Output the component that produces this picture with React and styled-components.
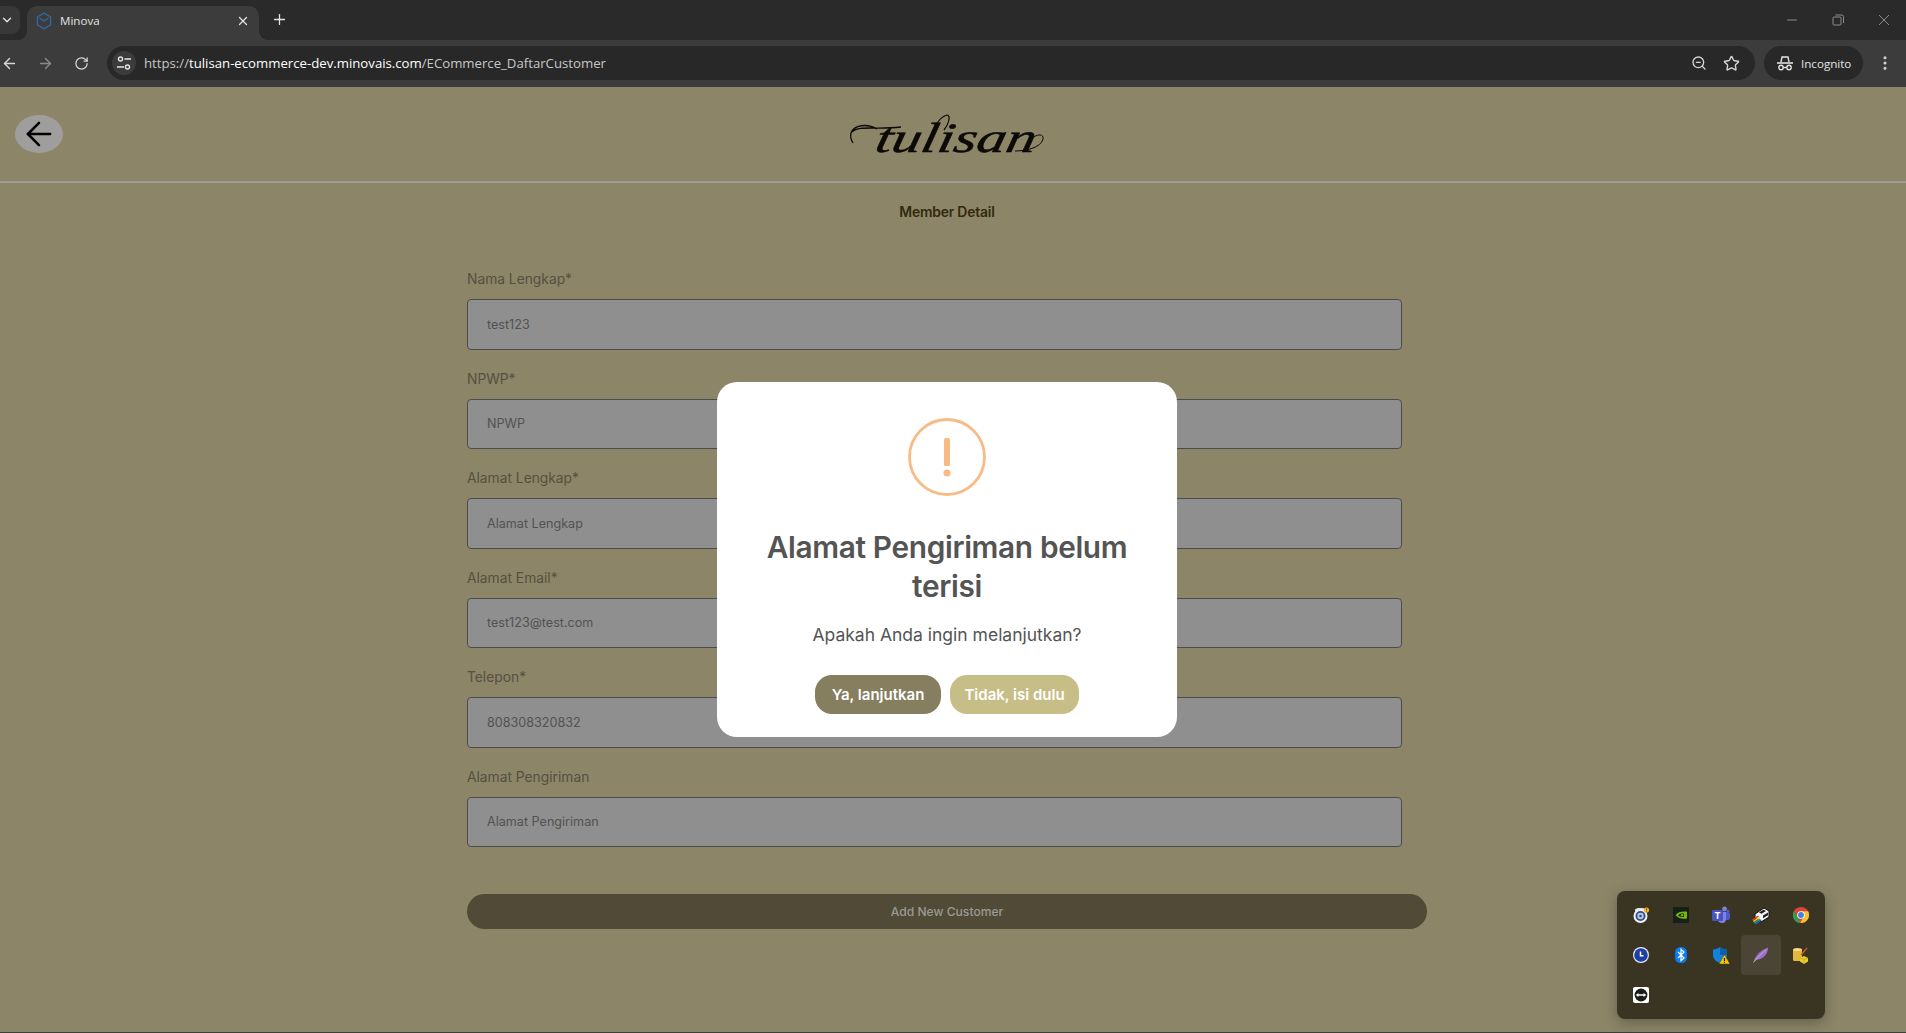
import styled, { createGlobalStyle } from "styled-components";
import { ArrowLeft, ArrowRight, ChevronDown, Plus, RotateCw, ZoomOut, Star, X, EllipsisVertical } from "lucide-react";

const Global = createGlobalStyle`
  html, body { margin: 0; padding: 0; background: #8c8568; }
  body { font-family: Inter, "Liberation Sans", sans-serif; }
  * { box-sizing: border-box; }
`;

const Screen = styled.div`
  width: 1906px;
  height: 1033px;
  display: flex;
  flex-direction: column;
  overflow: hidden;
  position: relative;
`;

/* browser chrome */
const TabStrip = styled.div`
  height: 40px;
  background: #2a2a2a;
  display: flex;
  align-items: flex-end;
  color: #e3e3e3;
  font-family: "Open Sans", "Liberation Sans", sans-serif;
`;
const TabList = styled.div`
  width: 20px;
  height: 28px;
  margin-right: 7px;
  align-self: flex-start;
  margin-top: 6px;
  padding-right: 6px;
  background: #383838;
  border-radius: 0 8px 8px 0;
  display: flex;
  align-items: center;
  justify-content: center;
`;
const Tab = styled.div`
  width: 232px;
  height: 34px;
  background: #3c3c3c;
  border-radius: 10px 10px 0 0;
  display: flex;
  align-items: center;
  padding: 0 9px 5px 9px;
  font-size: 11.6px;
  position: relative;

  &::before, &::after {
    content: "";
    position: absolute;
    bottom: 0;
    width: 10px;
    height: 10px;
  }
  &::before {
    left: -10px;
    background: radial-gradient(circle at 0 0, transparent 10px, #3c3c3c 10.5px);
  }
  &::after {
    right: -10px;
    background: radial-gradient(circle at 100% 0, transparent 10px, #3c3c3c 10.5px);
  }
`;
const TabTitle = styled.span`
  flex: 1;
  margin-left: 8px;
`;
const NewTab = styled.div`
  width: 40px;
  height: 34px;
  display: flex;
  align-items: center;
  justify-content: center;
  align-self: flex-start;
  margin-top: 2px;
`;
const WindowControls = styled.div`
  margin-left: auto;
  align-self: flex-start;
  display: flex;
  padding-top: 12px;
  padding-right: 14px;
  gap: 30px;
  svg { display: block; }
`;
const Toolbar = styled.div`
  height: 47px;
  background: #3c3c3c;
  display: flex;
  align-items: center;
  padding: 0 10px 1px 0;
  color: #e3e3e3;
  font-family: "Open Sans", "Liberation Sans", sans-serif;
`;
const NavButton = styled.div`
  width: ${(p) => p.$w || 36}px;
  height: 34px;
  display: flex;
  align-items: center;
  justify-content: center;
  color: ${(p) => (p.$off ? "#8a8a8a" : "#d6d6d6")};
`;
const NavGap = styled.div`
  width: 9px;
`;
const UrlBar = styled.div`
  width: 1648px;
  height: 34px;
  margin-left: 8px;
  border-radius: 17px;
  background: #282828;
  display: flex;
  align-items: center;
  padding: 0 15px 0 5px;
  font-size: 13.2px;
`;
const SiteInfo = styled.div`
  width: 24px;
  height: 24px;
  border-radius: 50%;
  background: #3c3c3c;
  display: flex;
  align-items: center;
  justify-content: center;
  margin-right: 8px;
`;
const UrlText = styled.div`
  flex: 1;
  color: #c7c7c7;
  span { color: #fff; }
`;
const UrlIcons = styled.div`
  display: flex;
  align-items: center;
  gap: 16px;
  color: #d6d6d6;
`;
const IncognitoPill = styled.div`
  width: 99px;
  height: 34px;
  margin-left: 9px;
  border-radius: 17px;
  background: #282828;
  display: flex;
  align-items: center;
  gap: 7px;
  padding-left: 12px;
  font-size: 11.6px;
`;
const MenuDots = styled.div`
  margin-left: 13px;
  display: flex;
  color: #d6d6d6;
`;

/* page */
const Page = styled.main`
  flex: 1;
  background: #8c8568;
  border-bottom: 1px solid #3f3f3a;
  position: relative;
`;
const Header = styled.header`
  height: 96px;
  padding: 0 12px 1px 15px;
  border-bottom: 2px solid #9e9a94;
  display: grid;
  grid-template-columns: 1fr auto 1fr;
  align-items: center;
`;
const BackButton = styled.button`
  width: 48px;
  height: 38px;
  padding: 0;
  border: 0;
  border-radius: 50%;
  background: #a09e9c;
  color: #000;
  display: flex;
  align-items: center;
  justify-content: center;
`;
const Logo = styled.svg`
  display: block;
  overflow: visible;
`;
const Heading = styled.h1`
  margin: 19px 12px 0 0;
  text-align: center;
  font-size: 13.9px;
  line-height: 20px;
  font-weight: 600;
  letter-spacing: -0.2px;
  color: #33290f;
`;
const Form = styled.form`
  width: 960px;
  margin: 46px 0 0 467px;
  display: flex;
  flex-direction: column;
`;
const Field = styled.label`
  display: block;
  height: 99.5px;
`;
const FieldName = styled.div`
  height: 20px;
  line-height: 20px;
  padding-top: 1px;
  font-size: 13.8px;
  color: #565040;
  margin-bottom: 11px;
`;
const Input = styled.input`
  display: block;
  width: 935px;
  height: 50.5px;
  padding: 0 19px;
  border: 1px solid #4c4c4c;
  border-radius: 4px;
  background: #8f8f8f;
  color: #525252;
  font: 12.6px Inter, "Liberation Sans", sans-serif;
  outline: none;
`;
const SubmitButton = styled.button`
  margin-top: 29px;
  width: 960px;
  height: 35px;
  border: 0;
  border-radius: 18px;
  background: #504a36;
  color: #9a9a96;
  font: 500 12.1px Inter, "Liberation Sans", sans-serif;
`;

/* dialog */
const Backdrop = styled.div`
  position: absolute;
  inset: 0;
  padding-right: 12px;
  display: flex;
  align-items: center;
  justify-content: center;
`;
const Dialog = styled.div`
  width: 460px;
  height: 355px;
  background: #fff;
  border-radius: 20px;
  display: flex;
  flex-direction: column;
  align-items: center;
  padding-top: 36px;
`;
const DialogTitle = styled.h2`
  margin: 32px 0 0;
  width: 390px;
  text-align: center;
  font-size: 29.8px;
  line-height: 39px;
  font-weight: 600;
  letter-spacing: -0.35px;
  color: #545454;
`;
const DialogText = styled.p`
  margin: 16px 0 0;
  font-size: 17.5px;
  line-height: 26px;
  color: #545454;
`;
const DialogActions = styled.div`
  display: flex;
  gap: 9px;
  margin-top: 27px;
`;
const DialogButton = styled.button`
  width: ${(p) => p.$w}px;
  height: 39px;
  border: 0;
  border-radius: 17px;
  background: ${(p) => p.$bg};
  color: #fff;
  font: 600 15px Inter, "Liberation Sans", sans-serif;
  padding: 0;
`;

/* system tray flyout */
const TrayPopup = styled.div`
  position: absolute;
  left: 1617px;
  top: 891px;
  width: 208px;
  height: 128px;
  padding: 4px;
  background: #3a3422;
  border-radius: 8px;
  box-shadow: 0 4px 14px rgba(0, 0, 0, 0.28);
  display: grid;
  grid-template-columns: repeat(5, 40px);
  grid-auto-rows: 40px;
`;
const TrayCell = styled.div`
  border-radius: 4px;
  background: ${(p) => (p.$active ? "#4a4534" : "transparent")};
  display: flex;
  align-items: center;
  justify-content: center;
  svg { display: block; }
`;

const fields = [
  ["Nama Lengkap*", "test123"],
  ["NPWP*", "NPWP"],
  ["Alamat Lengkap*", "Alamat Lengkap"],
  ["Alamat Email*", "test123@test.com"],
  ["Telepon*", "808308320832"],
  ["Alamat Pengiriman", "Alamat Pengiriman"],
];

const Favicon = () => (
  <svg width="16" height="18" viewBox="0 0 16 18" fill="none" stroke="#2f6ea8" strokeWidth="1.2">
    <path d="M8 1.2 14.6 5v8L8 16.8 1.4 13V5z" />
    <path d="M3.6 6.2 8 9l4.4-2.8" />
  </svg>
);

const TuneIcon = () => (
  <svg width="16" height="16" viewBox="0 0 16 16" fill="none" stroke="#e3e3e3" strokeWidth="1.4">
    <circle cx="4.5" cy="4" r="2" />
    <path d="M8.5 4H15M1 12h7" />
    <circle cx="11.5" cy="12" r="2" />
  </svg>
);

const IncognitoIcon = () => (
  <svg width="18" height="16" viewBox="0 0 18 16" fill="none" stroke="#e3e3e3" strokeWidth="1.4">
    <path d="M5 7l1-5h6l1 5" />
    <path d="M1 8h16" strokeWidth="1.6" />
    <circle cx="5" cy="12.5" r="2.2" />
    <circle cx="13" cy="12.5" r="2.2" />
    <path d="M7.2 12.5h3.6" />
  </svg>
);

const TrayIcons = [
  <svg key="a" width="18" height="18" viewBox="0 0 18 18">
    <path d="M3 3.5C5 1.6 12 1.6 14 3.5v2H3z" fill="#dfe3ea" />
    <circle cx="8.5" cy="10" r="7" fill="#eef1f6" />
    <circle cx="8.5" cy="10" r="5" fill="#2d4f86" />
    <circle cx="8.5" cy="10" r="3.2" fill="#b9c8e0" />
    <circle cx="8.5" cy="10" r="1.3" fill="#2d4f86" />
    <circle cx="14.5" cy="4" r="2.6" fill="#f2b01e" />
    <path d="M14.5 2.6v1.8M14.5 5v.4" stroke="#3a2a00" strokeWidth=".8" />
  </svg>,
  <svg key="b" width="16" height="16" viewBox="0 0 16 16">
    <rect width="16" height="16" fill="#15201a" />
    <path d="M2.5 8.2C5 4.8 10 4 14 4.8v6.6c-4 .8-8.4.2-11.5-3.2z" fill="#76b900" />
    <path d="M5 8.2c1.6-1.6 4-2 6-1.4v3c-2 .5-4.4 0-6-1.6z" fill="#15201a" />
    <circle cx="9" cy="8.2" r="1.2" fill="#76b900" />
  </svg>,
  <svg key="c" width="18" height="18" viewBox="0 0 18 18">
    <circle cx="12.5" cy="3" r="2.4" fill="#7b83d6" />
    <circle cx="16" cy="5" r="1.6" fill="#5059c9" />
    <rect x="9" y="6" width="9" height="8" rx="2.5" fill="#5059c9" />
    <path d="M6 6h8v7a4 4 0 0 1-8 0z" fill="#7b83eb" />
    <rect x="0" y="4" width="11" height="11" rx="1.2" fill="#4b53bc" />
    <text x="5.5" y="13" textAnchor="middle" fontSize="9" fontWeight="700" fill="#fff" fontFamily="Inter, sans-serif">T</text>
  </svg>,
  <svg key="d" width="18" height="18" viewBox="0 0 18 18">
    <path d="M3 8l9-6 5 3v6l-8 5-6-4z" fill="#f4f4f4" stroke="#0c0c0c" strokeWidth="1" />
    <path d="M7 6.5l4.5-2.8 2.5 1.3-4.5 2.8z" fill="#1f1f1f" />
    <path d="M11 9.5l5-3v2.8l-5 3z" fill="#222" />
    <path d="M0 13.5l6-4 1 1-6 4z" fill="#e8352b" />
    <path d="M.8 15l6-4 1 1-6 4z" fill="#f3d21b" />
    <path d="M1.6 16.4l6-4 1 1-6 4z" fill="#2fa84a" />
    <path d="M2.8 17.6l6-4 .8 1-5.8 4z" fill="#2b58d8" />
  </svg>,
  <svg key="e" width="16" height="16" viewBox="0 0 16 16">
    <circle cx="8" cy="8" r="8" fill="#db4437" />
    <path d="M15.1 4.3A8 8 0 0 1 7.2 16L10.9 9.5 8 4.3z" fill="#fbc02d" />
    <path d="M.9 3.9 4.6 10 7.2 16A8 8 0 0 1 .9 3.900z" fill="#2e9e4f" />
    <circle cx="8" cy="8" r="3.8" fill="#fff" />
    <circle cx="8" cy="8" r="2.9" fill="#3f7fe0" />
  </svg>,
  <svg key="f" width="16" height="16" viewBox="0 0 16 16">
    <circle cx="8" cy="8" r="8" fill="#e9ecf5" />
    <circle cx="8" cy="8" r="6.8" fill="#1d3fa6" />
    <path d="M7.5 4.4v4.4h3" fill="none" stroke="#fff" strokeWidth="1.5" />
  </svg>,
  <svg key="g" width="12" height="16" viewBox="0 0 12 16">
    <rect width="12" height="16" rx="5.5" fill="#0a7cf2" />
    <path d="M3 5l6 6-3 2.6V2.4L9 5l-6 6" fill="none" stroke="#fff" strokeWidth="1.2" />
  </svg>,
  <svg key="h" width="17" height="17" viewBox="0 0 17 17">
    <path d="M0 2.4C3 2.4 5 1.4 7 0c2 1.4 4 2.4 7 2.4V8c0 4-3 6.6-7 8-4-1.4-7-4-7-8z" fill="#1482d8" />
    <path d="M7 0c2 1.4 4 2.4 7 2.4V8H7z" fill="#0b5ea8" />
    <path d="M11.5 7.500 17 17H6z" fill="#f7c600" stroke="#2a2510" strokeWidth=".4" />
    <path d="M11.5 11v3M11.5 14.800v1" stroke="#111" strokeWidth="1.1" />
  </svg>,
  <svg key="i" width="16" height="16" viewBox="0 0 16 16">
    <path d="M.5 15.5C1.5 10 6 4 15 .5 15 7 10.5 12.5 3 13z" fill="#9a6fc4" />
    <path d="M.5 15.500C4 11 8 7 13.5 2.5" stroke="#d9c4ee" strokeWidth=".7" fill="none" />
  </svg>,
  <svg key="j" width="16" height="17" viewBox="0 0 16 17">
    <rect x="0" y="2" width="9" height="12" rx="1.5" fill="#e2b93b" />
    <ellipse cx="4.5" cy="2.5" rx="4.5" ry="1.6" fill="#f3dc85" />
    <path d="M8 8l6-7" stroke="#c85a3c" strokeWidth="1.4" />
    <path d="M11 9l4 2v3.600L11 17l-4-2.400V11z" fill="#e8cf2a" />
    <path d="M11 12.500 15 11M11 12.500 7 11M11 12.500V17" stroke="#b89b10" strokeWidth=".6" fill="none" />
  </svg>,
  <svg key="k" width="16" height="16" viewBox="0 0 16 16">
    <rect width="16" height="16" rx="2" fill="#fff" />
    <circle cx="8" cy="8" r="6.4" fill="#1c1c1c" />
    <path d="M2.8 8 5.4 6v1.200h5.200V6l2.600 2-2.600 2V8.800H5.400V10z" fill="#fff" />
  </svg>,
];

const App = () => {
  return (
    <Screen>
      <Global />
      <TabStrip>
        <TabList>
          <ChevronDown size={14} strokeWidth={2.4} />
        </TabList>
        <Tab>
          <Favicon />
          <TabTitle>Minova</TabTitle>
          <X size={14} strokeWidth={2.2} />
        </Tab>
        <NewTab>
          <Plus size={17} strokeWidth={1.8} />
        </NewTab>
        <WindowControls>
          <svg width="16" height="16" viewBox="0 0 16 16" stroke="#8b8b8b" fill="none"><path d="M3 8h10" /></svg>
          <svg width="16" height="16" viewBox="0 0 16 16" stroke="#8b8b8b" fill="none"><rect x="3" y="5" width="8" height="8" rx="1" /><path d="M5.5 3H12a1.5 1.5 0 0 1 1.5 1.5V11" /></svg>
          <svg width="16" height="16" viewBox="0 0 16 16" stroke="#8b8b8b" fill="none"><path d="M3 3l10 10M13 3 3 13" /></svg>
        </WindowControls>
      </TabStrip>
      <Toolbar>
        <NavButton $w={18}>
          <ArrowLeft size={17} />
        </NavButton>
        <NavGap />
        <NavButton $off>
          <ArrowRight size={17} />
        </NavButton>
        <NavButton>
          <RotateCw size={15} />
        </NavButton>
        <UrlBar>
          <SiteInfo>
            <TuneIcon />
          </SiteInfo>
          <UrlText>
            https://<span>tulisan-ecommerce-dev.minovais.com</span>/ECommerce_DaftarCustomer
          </UrlText>
          <UrlIcons>
            <ZoomOut size={16} />
            <Star size={17} />
          </UrlIcons>
        </UrlBar>
        <IncognitoPill>
          <IncognitoIcon />
          Incognito
        </IncognitoPill>
        <MenuDots>
          <EllipsisVertical size={18} />
        </MenuDots>
      </Toolbar>
      <Page>
        <Header>
          <BackButton type="button" aria-label="Kembali">
            <ArrowLeft size={38} strokeWidth={1.6} />
          </BackButton>
          <Logo width="200" height="52" viewBox="0 0 200 52">
            <g transform="skewX(-12)">
              <text x="28" y="44" fontFamily="Liberation Serif, serif" fontStyle="italic" fontSize="42" stroke="#0b0a06" strokeWidth=".5" fill="#0b0a06" textLength="160" lengthAdjust="spacingAndGlyphs">tulisan</text>
            </g>
            <path d="M22 21C12 15-1 17-4 25c-1 4 0 7 2 10M-3 24C4 17 20 22 46 19" fill="none" stroke="#0b0a06" strokeWidth="1.3" />
            <path d="M71 41C76 27 82 9 92 7c4 0 2 9-3 15" fill="none" stroke="#0b0a06" strokeWidth="1.2" />
            <path d="M160 43c10 0 26-3 28-12 1-5-5-5-9-2" fill="none" stroke="#0b0a06" strokeWidth="1" />
          </Logo>
          <span />
        </Header>
        <Heading>Member Detail</Heading>
        <Form>
          {fields.map(([name, value]) => (
            <Field key={name}>
              <FieldName>{name}</FieldName>
              <Input readOnly value={value} />
            </Field>
          ))}
          <SubmitButton type="button">Add New Customer</SubmitButton>
        </Form>
        <Backdrop>
          <Dialog>
            <svg width="78" height="78" viewBox="0 0 78 78" fill="none">
              <circle cx="39" cy="39" r="37.5" stroke="#f8bb86" strokeWidth="2.8" />
              <rect x="36" y="20" width="6" height="28" rx="1.5" fill="#f8bb86" />
              <circle cx="39" cy="55" r="3.6" fill="#f8bb86" />
            </svg>
            <DialogTitle>Alamat Pengiriman belum terisi</DialogTitle>
            <DialogText>Apakah Anda ingin melanjutkan?</DialogText>
            <DialogActions>
              <DialogButton type="button" $w={126} $bg="#857e5f">Ya, lanjutkan</DialogButton>
              <DialogButton type="button" $w={129} $bg="#c7bd87">Tidak, isi dulu</DialogButton>
            </DialogActions>
          </Dialog>
        </Backdrop>
      </Page>
      <TrayPopup>
        {TrayIcons.map((icon, i) => (
          <TrayCell key={i} $active={i === 8}>{icon}</TrayCell>
        ))}
      </TrayPopup>
    </Screen>
  );
};

export default App;
